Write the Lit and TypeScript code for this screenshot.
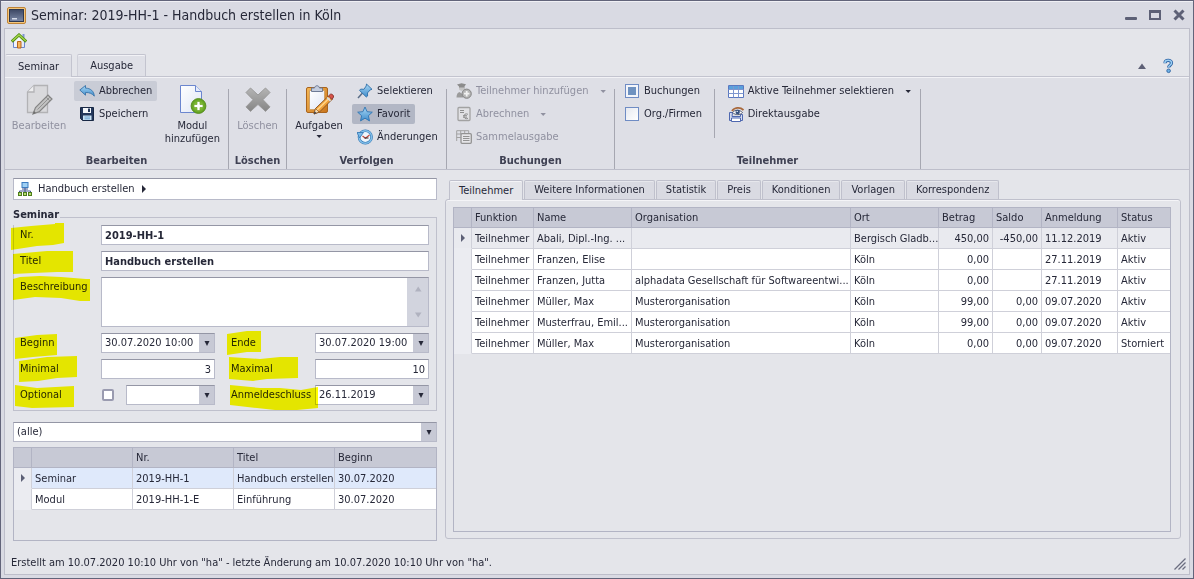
import { LitElement, html, css, svg, nothing, TemplateResult } from 'lit';
import { customElement } from 'lit/decorators.js';
import { classMap } from 'lit/directives/class-map.js';

type Glyph = TemplateResult;

const gradients = html`
  <svg class="defs" width="0" height="0" aria-hidden="true">
    <defs>
      <linearGradient id="blue" x1="0" y1="0" x2="0" y2="1">
        <stop offset="0" stop-color="#a9d8f5" /><stop offset="1" stop-color="#3f8ccb" />
      </linearGradient>
      <linearGradient id="paper" x1="0" y1="0" x2="1" y2="1">
        <stop offset="0" stop-color="#ffffff" /><stop offset="1" stop-color="#dfe6f5" />
      </linearGradient>
      <linearGradient id="grey" x1="0" y1="0" x2="0" y2="1">
        <stop offset="0" stop-color="#b4b4b4" /><stop offset="1" stop-color="#858585" />
      </linearGradient>
      <linearGradient id="screen" x1="0" y1="0" x2="0" y2="1">
        <stop offset="0" stop-color="#3c4763" /><stop offset="1" stop-color="#7d8aa8" />
      </linearGradient>
      <linearGradient id="wood" x1="0" y1="0" x2="1" y2="1">
        <stop offset="0" stop-color="#f7b955" /><stop offset="1" stop-color="#c8741c" />
      </linearGradient>
      <radialGradient id="green">
        <stop offset="0" stop-color="#a8dc4e" /><stop offset="1" stop-color="#5a9c1c" />
      </radialGradient>
    </defs>
  </svg>`;

const icon = (size: number, body: unknown): Glyph =>
  html`<svg width=${size} height=${size} viewBox="0 0 ${size} ${size}" aria-hidden="true">${body}</svg>`;

const icons = {
  app: icon(20, svg`
    <rect x=".5" y="2.500" width="18" height="16" rx="1.5" fill="#f3c67c" stroke="#c08437"/>
    <rect x="2.5" y="4.500" width="14" height="12" fill="url(#screen)" stroke="#2f3850"/>
    <path d="M5 13h5v1.500H5z" fill="#d5dbe8"/>`),
  home: icon(16, svg`
    <path d="M11.500 1h2v4h-2z" fill="#7f95d3"/>
    <path d="M2.500 7.500 8 2.500l5.500 5v7h-11z" fill="url(#paper)" stroke="#6b86cf"/>
    <path d="M.8 8.600 8 2l7.200 6.600" fill="none" stroke="#4f8a10" stroke-width="3"/>
    <path d="M1.200 8 8 1.900l6.800 6.100" fill="none" stroke="#a3d64a" stroke-width="1.300"/>
    <path d="M6.500 8.500h3.500v6.500H6.500z" fill="#f5b65c" stroke="#b9661b"/>`),
  editPage: icon(32, svg`
    <path d="M11 1.500h13.500v27H4.500V8z" fill="#d9d9dc" stroke="#b2b2b5" stroke-width="1.300"/>
    <path d="M11 1.500V8H4.500" fill="#eeeeef" stroke="#b2b2b5" stroke-width="1.300"/>
    <path d="m10 30 2.500-6.500L25 11l4 4L16.500 27.500z" fill="#c2c2c2" stroke="#858585" stroke-width="1.200"/>
    <path d="m23 13 4 4M14.500 25.500 27 13" stroke="#929292" fill="none"/>
    <path d="m10 30 1-3 2 2z" fill="#6d6d6d"/>`),
  newPage: icon(32, svg`
    <path d="M4.500 1.500h15l6 6v21h-21z" fill="url(#paper)" stroke="#6b86cf"/>
    <path d="M19.500 1.500v6h6" fill="#e4ebfa" stroke="#6b86cf"/>
    <circle cx="22.500" cy="22" r="7.400" fill="url(#green)" stroke="#5b8f22"/>
    <path d="M21 17.500h3V20.500h3v3h-3v3h-3v-3h-3v-3h3z" fill="#fff" stroke="#6ea52b" stroke-width=".7"/>`),
  cross: icon(32, svg`
    <path d="m8.500 4 7.500 7 7.500-7 4.500 4.500-7 7.200 7 7.200-4.500 4.500-7.500-7-7.500 7L4 22.900l7-7.200-7-7.200z" fill="url(#grey)" stroke="#9a9a9a"/>`),
  clipboard: icon(32, svg`
    <rect x="3.500" y="3.500" width="21" height="25" rx="1.500" fill="url(#wood)" stroke="#a9641d"/>
    <path d="M6.500 6.500h15v14l-5 5h-10z" fill="url(#paper)" stroke="#cfa36b"/>
    <path d="M8.500 7.500V4h3c.5-3 4.500-3 5 0h3v3.500z" fill="#c4cdde" stroke="#6d7a95"/>
    <path d="m11 30 1.500-5.500L25.500 12l3.500 3.500L16.500 28z" fill="#f2a23a" stroke="#8a5524"/>
    <path d="M13.500 26.500 27 13.500" stroke="#ffd58a" stroke-width="1.500"/>
    <path d="m25.500 12 2-1.800c1.500-.5 3.400 1.200 3 2.800l-1.500 2.500z" fill="#d9534a" stroke="#8c3b32"/>
    <path d="m24 13.500 3.500 3.500" stroke="#d6dce8" stroke-width="1.500"/>
    <path d="m11 30 1.500-5.500 3.500 3.500z" fill="#f6dfb8" stroke="#8a5524" stroke-width=".7"/>
    <path d="m11 30 .7-2.600 1.700 1.700z" fill="#22344e"/>`),
  undo: icon(16, svg`
    <path d="M.8 7 6.500 2.500v2.600c5 .2 8.500 3 8.800 8.100-2-2.500-4.600-3.800-8.800-3.700v2.700z" fill="url(#blue)" stroke="#3873a8" stroke-width=".9"/>`),
  save: icon(16, svg`
    <path d="M1.500 1.500h13v13h-11l-2-2z" fill="#24385c" stroke="#182844"/>
    <path d="M4 2h8v5H4z" fill="#f4f7fb"/><path d="M9 2.500h2V6H9z" fill="#24385c"/>
    <path d="M4 9.500h8.500V14H4z" fill="#c9e2f5"/><path d="M5.500 11h5.500M5.500 12.800h5.500" stroke="#6ea5d3"/>`),
  pin: icon(16, svg`
    <path d="M5.500 10 1 15" stroke="#5a6c86" stroke-width="1.500"/>
    <path d="m9.500 1 5.500 5.300-1.800.6-2.700 3 .1 3.100L9.300 14 2.500 7.400 3.700 6.100l3.200.2L9.200 3z" fill="url(#blue)" stroke="#2c6ea8" stroke-width=".9"/>`),
  star: icon(16, svg`
    <path d="m8 1 2.100 4.700 5.200.5-3.900 3.500 1.100 5.200L8 12.200l-4.500 2.700 1.100-5.200L.7 6.200l5.200-.5z" fill="url(#blue)" stroke="#2e74b2" stroke-width=".9"/>`),
  history: icon(16, svg`
    <circle cx="8.300" cy="8" r="6.300" fill="#eef6fc" stroke="#2e74b2" stroke-width="2.600"/>
    <circle cx="8.300" cy="8" r="6.300" fill="none" stroke="#84c0ea" stroke-width="1.500"/>
    <path d="M0 3.500h6.500L2.500 9z" fill="#7bbbe8" stroke="#2e74b2" stroke-width=".8"/>
    <path d="m5.500 7 3 2.200L12.500 6" stroke="#c0443a" fill="none" stroke-width="1.200"/><path d="M7.500 9h4" stroke="#333"/>`),
  addPerson: icon(16, svg`
    <path d="M1 1.500 5.500.3l4.500 1L8.500 3.500v2a3 3 0 0 1-5.500 0v-2z" fill="#8c8c8c"/>
    <path d="M3 4.500h5.500v1a2.800 2.800 0 0 1-5.500 0z" fill="#c4c4c4"/>
    <path d="M.5 14.500c0-3 1-5 3-5.500l4 3v2.500z" fill="#9b9b9b"/>
    <circle cx="10.700" cy="10.700" r="4.600" fill="#b5b5b5" stroke="#858585"/>
    <path d="M10.700 8v5.400M8 10.700h5.400" stroke="#f1f1f1" stroke-width="1.800"/>`),
  invoice: icon(16, svg`
    <rect x="2" y="1.500" width="12" height="13" rx="1" fill="#e1e1e4" stroke="#a2a2a2" stroke-width="1.300"/>
    <path d="M4 4.500h4M4 6.500h4" stroke="#8e8e8e"/>
    <path d="M12 8.300c-2.600-1.200-4 .2-4 2s1.500 3.100 4 2M7 9.700h4M7 11.200h4" fill="none" stroke="#8e8e8e"/>`),
  sheets: icon(16, svg`
    <path d="M.7 12V1.700h12V4M.7 5h5M.7 8.500h4M4.700 1.700V5M8.700 1.700V4" fill="none" stroke="#a2a2a2"/>
    <rect x="5" y="4.700" width="10.300" height="9.600" rx="1" fill="#e6e6e9" stroke="#929292" stroke-width="1.300"/>
    <path d="M7 7.500h6.500M7 9.500h6.500M7 11.500h6.500" stroke="#929292"/>`),
  grid: icon(16, svg`
    <path d="M.5 2.500h15v12H.5z" fill="#fff" stroke="#5a78c0"/><path d="M1 3h14v3H1z" fill="#5aa0dc"/>
    <path d="M.5 6.500h15M.5 10.500h15M5.500 3v11.500M10.500 3v11.500" stroke="#7e97cf"/>`),
  preview: icon(16, svg`
    <path d="M1.500 6.500h3l-.5 4h8.500v-2h2v6h-13z" fill="#d5dcf0" stroke="#4f68b0"/>
    <path d="M3.500 12h9v3.500h-9z" fill="#fff" stroke="#4f68b0"/>
    <path d="M4 5c2-3.500 8-4.500 11.500-1" fill="none" stroke="#a9693c" stroke-width="1.800"/>
    <path d="M4.500 6.500c2.500-3 7-3 10 0-2.500 2.800-7 2.800-10 0z" fill="#fff" stroke="#333c55" stroke-width=".8"/>
    <circle cx="9.700" cy="6" r="2.200" fill="#35507f"/><circle cx="9.200" cy="5.400" r=".7" fill="#fff"/>`),
  tree: icon(16, svg`
    <path d="M8 7v3M2.500 12v-2h11v2M8 10v2" stroke="#44598f" fill="none"/>
    <rect x="5" y="1.500" width="6" height="5" fill="#9fd0f4" stroke="#3d7cc0"/><path d="M5 8h6" stroke="#44598f"/>
    <g fill="#b8de6e" stroke="#4c7d1b"><rect x="1.500" y="11.500" width="3" height="3"/><rect x="6.500" y="11.500" width="3" height="3"/><rect x="11.500" y="11.500" width="3" height="3"/></g>`),
  help: icon(16, svg`
    <path d="M5 5.200C5 1.600 11.500 1.600 11.500 4.900c0 2.200-2.900 2.400-2.900 4.600" fill="none" stroke="#2d62a3" stroke-width="3.200"/>
    <path d="M4.800 5C5 1.500 11.500 1.500 11.500 4.900c0 2.200-2.900 2.400-2.900 4.300" fill="none" stroke="#9cd0f4" stroke-width="1.500"/>
    <circle cx="8.600" cy="12.800" r="1.800" fill="#6fb2e4" stroke="#2d62a3" stroke-width=".9"/>`),
  minimise: icon(12, svg`<rect x="0" y="8" width="12" height="3" rx="1" fill="#5d6076"/>`),
  maximise: icon(12, svg`<path d="M0 1h12v10H0zM2 4v5h8V4z" fill="#5d6076" fill-rule="evenodd"/>`),
  close: icon(12, svg`<path d="m1.500 1.500 9 9m0-9-9 9" stroke="#5d6076" stroke-width="3"/>`),
  collapse: icon(8, svg`<path d="M4 1.500 8 7H0z" fill="#5d6076"/>`),
  down: icon(8, svg`<path d="M1.500 3h5.400L4.200 6z" fill="currentColor"/>`),
  drop: icon(8, svg`<path d="M1.500 2h5L4 7z" fill="currentColor"/>`),
  up: icon(8, svg`<path d="M1 6.500h6.500L4.200 1.500z" fill="currentColor"/>`),
  scrollDown: icon(8, svg`<path d="M1 1.500h6.500L4.200 6.500z" fill="currentColor"/>`),
  right: icon(8, svg`<path d="M2 0v8l4-4z" fill="currentColor"/>`),
  grip: icon(12, svg`<path d="M.5 11.500l11-11M4.500 11.500l7-7M8.500 11.500l3-3" stroke="#6b6d80" stroke-width="1.300"/>`),
};

const marks: Record<string, string> = {
  nr: '1,7 21,5 45,3 45,2 54,2 54,22 43,24 27,25 1,29',
  titel: '3,7 37,4 63,4 63,25 47,25 23,26 3,27',
  beschreibung: '3,6 10,4 30,3 51,4 76,6 80,6 80,28 70,28 51,25 25,24 3,27',
  beginn: '5,9 27,6 47,5 47,26 23,28 5,30',
  minimal: '9,6 37,2 67,1 67,22 47,23 28,26 9,27',
  optional: '5,4 27,7 64,5 64,26 22,27 5,25',
  ende: '6,5 26,2 40,2 40,23 26,23 6,26',
  maximal: '8,2 39,4 59,2 77,2 77,23 46,24 32,26 8,24',
  anmeldeschluss: '9,4 39,7 59,7 80,9 97,6 97,27 76,29 54,29 36,27 9,24',
};

const participants = [
  ['Teilnehmer', 'Abali, Dipl.-Ing. ...', '', 'Bergisch Gladb...', '450,00', '-450,00', '11.12.2019', 'Aktiv'],
  ['Teilnehmer', 'Franzen, Elise', '', 'Köln', '0,00', '', '27.11.2019', 'Aktiv'],
  ['Teilnehmer', 'Franzen, Jutta', 'alphadata Gesellschaft für Softwareentwi...', 'Köln', '0,00', '', '27.11.2019', 'Aktiv'],
  ['Teilnehmer', 'Müller, Max', 'Musterorganisation', 'Köln', '99,00', '0,00', '09.07.2020', 'Aktiv'],
  ['Teilnehmer', 'Musterfrau, Emil...', 'Musterorganisation', 'Köln', '99,00', '0,00', '09.07.2020', 'Aktiv'],
  ['Teilnehmer', 'Müller, Max', 'Musterorganisation', 'Köln', '0,00', '0,00', '09.07.2020', 'Storniert'],
];

const modules = [
  ['Seminar', '2019-HH-1', 'Handbuch erstellen', '30.07.2020'],
  ['Modul', '2019-HH-1-E', 'Einführung', '30.07.2020'],
];

const base = css`
  * { box-sizing: border-box; }
  svg { display: block; flex: none; }
  button, input, select, textarea {
    font: inherit; color: inherit; margin: 0; padding: 0;
    border: 0; border-radius: 0; background: none; outline: none;
  }
  button { white-space: nowrap; }
`;

@customElement('ribbon-bar')
class RibbonBar extends LitElement {
  static styles = [base, css`
    :host { display: block; }
    .defs { position: absolute; }
    .quick { height: 25px; padding: 4px 6px; }
    .tabs { display: flex; gap: 5px; height: 22px; position: relative; }
    .tab {
      padding: 1px 12px 0; height: 22px; line-height: 20px;
      border: 1px solid #c3c4cf; border-bottom: 0; border-left-color: #cfd0d9;
      border-radius: 2px 2px 0 0; background: #dfe0e7; box-shadow: inset 0 1px #f2f2f6;
    }
    .tab.active { background: #dedfe6; height: 23px; border-left-color: #dedfe6; }
    .tools { margin-left: auto; padding: 2px 13px 0 0; display: flex; align-items: center; gap: 14px; }
    .body {
      display: flex; background: #dedfe6; border-top: 1px solid #c3c4cf; border-bottom: 1px solid #bdbeca;
      box-shadow: inset 0 1px #f2f2f6;
    }
    .group {
      display: flex; flex-direction: column; padding: 4px 1px 0 0; height: 92px; flex: none;
      background: linear-gradient(#a6a7b1, #a6a7b1) right bottom / 1px calc(100% - 12px) no-repeat;
    }
    .items { flex: 1; display: flex; align-items: flex-start; gap: 4px; padding: 0 3px; }
    .caption { text-align: center; font-weight: bold; line-height: 16px; height: 16px; color: #3f4153; }
    .stack { display: flex; flex-direction: column; align-items: flex-start; gap: 3px; }
    .small { display: flex; align-items: center; gap: 4px; height: 20px; padding: 0 5px; border-radius: 2px; }
    .small .arrow { margin-left: 6px; }
    .large {
      display: flex; flex-direction: column; align-items: center; min-width: 58px; padding-top: 3px;
      line-height: 13px; white-space: pre-line;
    }
    .large .text { margin-top: 3px; }
    .hover { background: #c9ccd6; }
    .pressed { background: #b2b7c5; }
    button:disabled { color: #9091a0; }
    .check { display: flex; align-items: center; gap: 5px; height: 20px; padding: 0 5px; }
    .check input {
      appearance: none; width: 14px; height: 14px; border: 1px solid #6f8cc4; flex: none;
      background: linear-gradient(135deg, #e6e9f0, #ffffff);
    }
    .check input:checked { background: linear-gradient(#6f92c0, #6f92c0) center / 8px 8px no-repeat, #f3f5fa; }
    .rule { width: 1px; height: 49px; margin: 8px 8px 0 0; background: #a6a7b1; }
    .edit { width: 224px; }
    .edit .items { gap: 6px; padding: 0 0 0 5px; }
    .delete { width: 58px; }
    .delete .items { padding: 0; justify-content: center; }
    .follow { width: 160px; }
    .book { width: 168px; }
    .book .items { padding-left: 4px; }
    .people { width: 306px; }
    .people .items { gap: 0; padding-left: 5px; }
    .checks { width: 96px; }
  `];

  small(text: string, glyph: Glyph, opts: { state?: string; off?: boolean; menu?: boolean } = {}) {
    return html`<button class="small ${opts.state ?? ''}" ?disabled=${opts.off ?? false}>
      ${glyph}<span>${text}</span>${opts.menu ? html`<span class="arrow">${icons.down}</span>` : nothing}
    </button>`;
  }

  large(text: string, glyph: Glyph, opts: { off?: boolean; menu?: boolean } = {}) {
    return html`<button class="large" ?disabled=${opts.off ?? false}>${glyph}<span class="text">${text}</span>${opts.menu ? icons.down : nothing}</button>`;
  }

  render() {
    return html`
      ${gradients}
      <div class="quick"><button aria-label="Start">${icons.home}</button></div>
      <div class="tabs">
        <button class="tab active">Seminar</button>
        <button class="tab">Ausgabe</button>
        <div class="tools">
          <button aria-label="Menüband einklappen">${icons.collapse}</button>
          <button aria-label="Hilfe">${icons.help}</button>
        </div>
      </div>
      <div class="body">
        <section class="group edit">
          <div class="items">
            ${this.large('Bearbeiten', icons.editPage, { off: true })}
            <div class="stack">
              ${this.small('Abbrechen', icons.undo, { state: 'hover' })}
              ${this.small('Speichern', icons.save)}
            </div>
            ${this.large('Modul\nhinzufügen', icons.newPage)}
          </div>
          <div class="caption">Bearbeiten</div>
        </section>
        <section class="group delete">
          <div class="items">${this.large('Löschen', icons.cross, { off: true })}</div>
          <div class="caption">Löschen</div>
        </section>
        <section class="group follow">
          <div class="items">
            ${this.large('Aufgaben', icons.clipboard, { menu: true })}
            <div class="stack">
              ${this.small('Selektieren', icons.pin)}
              ${this.small('Favorit', icons.star, { state: 'pressed' })}
              ${this.small('Änderungen', icons.history)}
            </div>
          </div>
          <div class="caption">Verfolgen</div>
        </section>
        <section class="group book">
          <div class="items">
            <div class="stack">
              ${this.small('Teilnehmer hinzufügen', icons.addPerson, { off: true, menu: true })}
              ${this.small('Abrechnen', icons.invoice, { off: true, menu: true })}
              ${this.small('Sammelausgabe', icons.sheets, { off: true })}
            </div>
          </div>
          <div class="caption">Buchungen</div>
        </section>
        <section class="group people">
          <div class="items">
            <div class="stack checks">
              <label class="check"><input type="checkbox" checked />Buchungen</label>
              <label class="check"><input type="checkbox" />Org./Firmen</label>
            </div>
            <div class="rule"></div>
            <div class="stack">
              ${this.small('Aktive Teilnehmer selektieren', icons.grid, { menu: true })}
              ${this.small('Direktausgabe', icons.preview)}
            </div>
          </div>
          <div class="caption">Teilnehmer</div>
        </section>
      </div>`;
  }
}

const tableStyles = css`
  .frame { border: 1px solid #b2b4c4; background: #e4e5ea; overflow: hidden; }
  table { width: 100%; table-layout: fixed; border-collapse: separate; border-spacing: 0; }
  th, td {
    padding: 0 0 0 3px; text-align: left; font-weight: normal; white-space: nowrap; overflow: hidden;
    border-right: 1px solid #cfd0d9; border-bottom: 1px solid #cfd0d9; background: #ffffff;
  }
  th { height: 20px; background: #c7c9d5; border-color: #b2b4c4; }
  td { height: 21px; padding-top: 1px; }
  th:last-child, td:last-child { border-right: 0; }
  td.mark { background: #ebecf1; border-bottom-color: #ebecf1; color: #5d6076; padding: 0 5px; }
  td.num { text-align: right; padding-right: 3px; }
`;

@customElement('seminar-form')
class SeminarForm extends LitElement {
  static styles = [base, tableStyles, css`
    :host { display: flex; flex-direction: column; min-height: 0; }
    .defs { position: absolute; }
    .box { background: #fff; border: 1px solid #b8bac9; border-top-color: #9496a5; min-width: 0; }
    .crumb { display: flex; align-items: center; height: 22px; padding: 0 3px; gap: 5px; }
    fieldset { margin: 9px 0 11px; padding: 0 7px 5px 6px; border: 1px solid #bfc0cc; min-width: 0; }
    legend { margin-left: -7px; padding: 0 1px 4px 0; line-height: 12px; font-weight: bold; }
    .fields { display: grid; grid-template-columns: 81px minmax(0, 1fr) 100px minmax(0, 1fr); gap: 6px 0; }
    .wide { grid-column: 2 / -1; }
    .name { position: relative; height: 20px; line-height: 20px; }
    .name.second { margin-left: 16px; }
    .name svg { position: absolute; left: -10px; top: -4px; mix-blend-mode: multiply; pointer-events: none; }
    .line { width: 100%; height: 20px; padding: 0 3px; }
    .strong { font-weight: bold; }
    .right { text-align: right; }
    .memo { display: flex; height: 50px; }
    .memo textarea { flex: 1; resize: none; padding: 3px; height: 48px; }
    .scroll { width: 21px; background: #d2d4de; color: #b0b2bf; display: flex; flex-direction: column; justify-content: space-between; align-items: center; padding: 7px 0; }
    .combo { display: flex; height: 20px; }
    .combo input { flex: 1; min-width: 0; padding: 0 3px; }
    .combo button, .arrow { width: 15px; background: #c7c9d5; display: flex; align-items: center; justify-content: center; flex: none; }
    .option { display: flex; gap: 12px; align-items: center; }
    .option input { appearance: none; width: 12px; height: 12px; margin-left: 1px; border: 2px solid #9a9bb0; border-radius: 2px; background: #fff; flex: none; }
    .pick { position: relative; display: flex; flex: 1; height: 20px; }
    .pick select { appearance: none; flex: 1; min-width: 0; padding: 0 3px; }
    .pick .arrow { pointer-events: none; }
    .frame { flex: 1; margin-top: 5px; min-height: 62px; }
    .lead { width: 18px; }
    .col { width: 101px; }
    .current td { background: #dfe9fb; }
    .current td.mark { background: #ebecf1; }
  `];

  name(id: string, text: string, second = false) {
    return html`<label class=${classMap({ name: true, second })} for=${id}>${text}
      <svg width="100" height="32" viewBox="0 0 100 32" aria-hidden="true"><polygon points=${marks[id]} fill="#ffff00" /></svg>
    </label>`;
  }

  date(id: string, value: string) {
    return html`<div class="box combo"><input id=${id} .value=${value} /><button aria-label="Kalender">${icons.drop}</button></div>`;
  }

  render() {
    return html`
      ${gradients}
      <div class="box crumb">${icons.tree}<span>Handbuch erstellen</span><span>${icons.right}</span></div>
      <fieldset>
        <legend>Seminar</legend>
        <div class="fields">
          ${this.name('nr', 'Nr.')}
          <input id="nr" class="box line wide strong" .value=${'2019-HH-1'} />
          ${this.name('titel', 'Titel')}
          <input id="titel" class="box line wide strong" .value=${'Handbuch erstellen'} />
          ${this.name('beschreibung', 'Beschreibung')}
          <div class="box memo wide">
            <textarea id="beschreibung"></textarea>
            <div class="scroll">${icons.up}${icons.scrollDown}</div>
          </div>
          ${this.name('beginn', 'Beginn')}
          ${this.date('beginn', '30.07.2020 10:00')}
          ${this.name('ende', 'Ende', true)}
          ${this.date('ende', '30.07.2020 19:00')}
          ${this.name('minimal', 'Minimal')}
          <input id="minimal" class="box line right" .value=${'3'} />
          ${this.name('maximal', 'Maximal', true)}
          <input id="maximal" class="box line right" .value=${'10'} />
          ${this.name('optional', 'Optional')}
          <div class="option">
            <input id="optional" type="checkbox" />
            <div class="box pick"><select aria-label="Option"><option></option></select><span class="arrow">${icons.drop}</span></div>
          </div>
          ${this.name('anmeldeschluss', 'Anmeldeschluss', true)}
          ${this.date('anmeldeschluss', '26.11.2019')}
        </div>
      </fieldset>
      <div class="filter">
        <div class="box pick"><select aria-label="Filter"><option>(alle)</option></select><span class="arrow">${icons.drop}</span></div>
      </div>
      <div class="frame">
        <table>
          <colgroup><col class="lead" /><col class="col" /><col class="col" /><col class="col" /><col /></colgroup>
          <thead><tr><th></th><th></th><th>Nr.</th><th>Titel</th><th>Beginn</th></tr></thead>
          <tbody>
            ${modules.map((row, i) => html`<tr class=${i === 0 ? 'current' : ''}>
              <td class="mark">${i === 0 ? icons.right : nothing}</td>${row.map(cell => html`<td>${cell}</td>`)}
            </tr>`)}
          </tbody>
        </table>
      </div>`;
  }
}

@customElement('participant-panel')
class ParticipantPanel extends LitElement {
  static styles = [base, tableStyles, css`
    :host { display: flex; flex-direction: column; min-width: 0; min-height: 0; }
    .tabs { display: flex; gap: 1px; padding-left: 4px; }
    .tab {
      height: 19px; padding: 0 9px; line-height: 18px; border: 1px solid #bfc0cc; border-bottom: 0;
      border-radius: 2px 2px 0 0; background: #d9dae2; box-shadow: inset 0 1px #e6e7ec;
    }
    .tab.active { background: #e4e5ea; height: 20px; margin-bottom: -1px; position: relative; box-shadow: inset 0 1px #f4f4f7; }
    .panel {
      flex: 1; display: flex; padding: 7px 9px 6px 7px; border: 1px solid #bfc0cc; border-radius: 3px;
      background: #e4e5ea; box-shadow: inset 0 1px #f4f4f7; min-height: 0;
    }
    .frame { flex: 1; min-width: 0; }
    .lead { width: 18px; }
    .c0 { width: 62px; } .c1 { width: 98px; } .c3 { width: 88px; } .c4 { width: 54px; }
    .c5 { width: 49px; } .c6 { width: 76px; } .c7 { width: 52px; }
    .current td { background: #e9eaef; }
  `];

  render() {
    const tabs = ['Teilnehmer', 'Weitere Informationen', 'Statistik', 'Preis', 'Konditionen', 'Vorlagen', 'Korrespondenz'];
    const heads = ['Funktion', 'Name', 'Organisation', 'Ort', 'Betrag', 'Saldo', 'Anmeldung', 'Status'];
    return html`
      <div class="tabs">
        ${tabs.map((t, i) => html`<button class=${classMap({ tab: true, active: i === 0 })}>${t}</button>`)}
      </div>
      <div class="panel">
        <div class="frame">
          <table>
            <colgroup><col class="lead" />${heads.map((_, i) => html`<col class="c${i}" />`)}</colgroup>
            <thead><tr><th></th>${heads.map(h => html`<th>${h}</th>`)}</tr></thead>
            <tbody>
              ${participants.map((row, i) => html`<tr class=${i === 0 ? 'current' : ''}>
                <td class="mark">${i === 0 ? icons.right : nothing}</td>
                ${row.map((cell, c) => html`<td class=${c === 4 || c === 5 ? 'num' : ''}>${cell}</td>`)}
              </tr>`)}
            </tbody>
          </table>
        </div>
      </div>`;
  }
}

@customElement('app-root')
class AppRoot extends LitElement {
  static styles = [base, css`
    :host {
      display: flex; flex-direction: column; height: 100vh; box-sizing: border-box; padding: 1px 3px 3px;
      border: 1px solid #62647a; background: #d9dae3; color: #262838; box-shadow: inset 0 1px #f0f0f5;
      font: 11px/14px 'DejaVu Sans Condensed', 'DejaVu Sans', sans-serif; font-stretch: condensed;
    }
    .defs { position: absolute; }
    .title { display: flex; align-items: center; gap: 4px; height: 26px; padding: 0 5px 0 3px; }
    h1 { margin: 0; font-size: 14px; line-height: 20px; font-weight: normal; flex: 1; white-space: nowrap; }
    .controls { display: flex; gap: 12px; }
    .client {
      flex: 1; display: flex; flex-direction: column; min-height: 0;
      border: 1px solid #bdbeca; background: #e4e5ea;
    }
    main {
      flex: 1; min-height: 0; display: grid; grid-template-columns: 424px minmax(0, 1fr);
      gap: 8px; padding: 8px 8px 0;
    }
    participant-panel { padding-top: 2px; padding-bottom: 2px; }
    footer { display: flex; align-items: flex-end; justify-content: space-between; height: 33px; padding: 0 3px 4px 6px; }
  `];

  render() {
    return html`
      ${gradients}
      <header class="title">
        ${icons.app}
        <h1>Seminar: 2019-HH-1 - Handbuch erstellen in Köln</h1>
        <div class="controls">
          <button aria-label="Minimieren">${icons.minimise}</button>
          <button aria-label="Maximieren">${icons.maximise}</button>
          <button aria-label="Schließen">${icons.close}</button>
        </div>
      </header>
      <div class="client">
        <ribbon-bar></ribbon-bar>
        <main>
          <seminar-form></seminar-form>
          <participant-panel></participant-panel>
        </main>
        <footer>
          <span>Erstellt am 10.07.2020 10:10 Uhr von "ha" - letzte Änderung am 10.07.2020 10:10 Uhr von "ha".</span>
          ${icons.grip}
        </footer>
      </div>`;
  }
}
